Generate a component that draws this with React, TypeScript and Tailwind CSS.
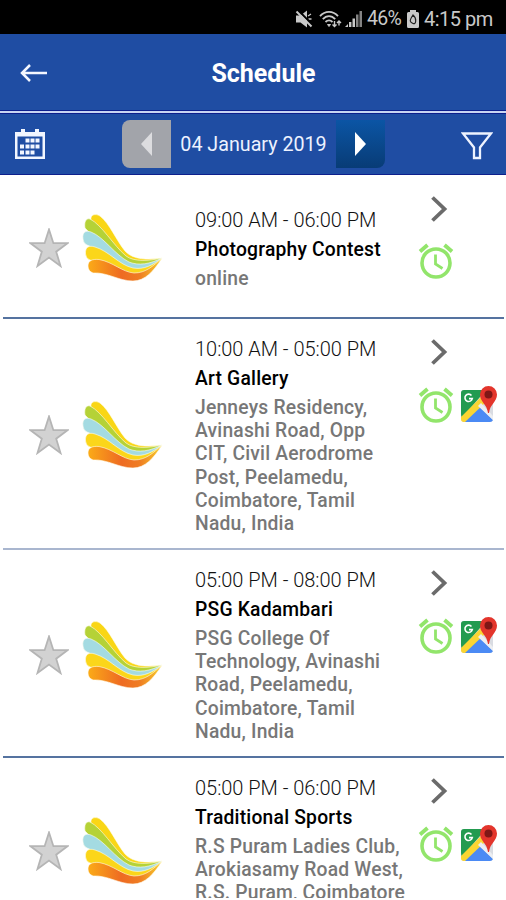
import React from "react";

interface ScheduleEvent {
  time: string;
  title: string;
  venue: string[];
  hasMap: boolean;
  rowClass: string;
}

const events: ScheduleEvent[] = [
  {
    time: "09:00 AM - 06:00 PM",
    title: "Photography Contest",
    venue: ["online"],
    hasMap: false,
    rowClass: "h-[143px] border-[#5573a0]",
  },
  {
    time: "10:00 AM - 05:00 PM",
    title: "Art Gallery",
    venue: [
      "Jenneys Residency,",
      "Avinashi Road, Opp",
      "CIT, Civil Aerodrome",
      "Post, Peelamedu,",
      "Coimbatore, Tamil",
      "Nadu, India",
    ],
    hasMap: true,
    rowClass: "h-[231px] border-[#a9b6cf]",
  },
  {
    time: "05:00 PM - 08:00 PM",
    title: "PSG Kadambari",
    venue: [
      "PSG College Of",
      "Technology, Avinashi",
      "Road, Peelamedu,",
      "Coimbatore, Tamil",
      "Nadu, India",
    ],
    hasMap: true,
    rowClass: "h-[208px] border-[#5573a0]",
  },
  {
    time: "05:00 PM - 06:00 PM",
    title: "Traditional Sports",
    venue: ["R.S Puram Ladies Club,", "Arokiasamy Road West,", "R.S. Puram, Coimbatore"],
    hasMap: true,
    rowClass: "h-[185px] border-[#5573a0]",
  },
];

const StatusBar = () => (
  <div className="h-[34px] shrink-0 bg-black flex items-center pl-[295px] pt-[3px] text-[#c9c9c9]">
    {/* Muted speaker */}
    <svg className="w-[18px] h-[18px] shrink-0" viewBox="0 0 18 18">
      <path d="M1 5.500h4.500L12 .5v17l-6.500-5H1z" fill="currentColor" />
      <path d="M13 6l3-2M13.500 9h3" stroke="currentColor" strokeWidth="1.3" />
      <path d="M3.500 .5l14 14.500" stroke="#000" strokeWidth="2" />
      <path d="M1.500 1.500l15 15" stroke="currentColor" strokeWidth="2" />
    </svg>
    {/* Wifi */}
    <svg className="w-[23px] h-[18px] shrink-0 ml-[6px]" viewBox="0 0 23 18" fill="none" stroke="currentColor" strokeWidth="1.8">
      <path d="M1 6.2C6 .4 14 .4 19 6.2" />
      <path d="M3.800 9.200C7.500 5 12.500 5 16.200 9.200" />
      <path d="M6.500 12c2.200-2.200 4.800-2.200 7 0" />
      <path d="M8.500 14.500h3L10 16.500z" fill="currentColor" strokeWidth="1" />
      <path d="M15.500 11v5m-2-1.500l2 2 2-2M20 15.500V11m-2 2l2-2 2 2" strokeWidth="1.4" />
    </svg>
    {/* Signal */}
    <svg className="w-[18px] h-[18px] shrink-0 ml-[3px]" viewBox="0 0 18 18" fill="currentColor">
      <path d="M0 17l3-3v3z" />
      <path d="M4 12h2.400v5H4zM7.500 8.500h2.500V17H7.500z" />
      <path d="M11 4.500h2.500V17H11zM14.500 1h2.500v16h-2.500z" opacity=".65" />
    </svg>
    <span className="ml-[4px] w-[34px] text-[19.500px] leading-5 tracking-[-0.700px] whitespace-nowrap">46%</span>
    {/* Battery */}
    <svg className="w-[12px] h-[18px] shrink-0 ml-[6px]" viewBox="0 0 12 18">
      <path d="M3 0h6v2h1.500Q12 2 12 3.500v13q0 1.500-1.500 1.500h-9Q0 18 0 16.500v-13Q0 2 1.500 2H3z" fill="currentColor" />
      <path d="M6 5Q9 7.500 8.700 11T6 13.500 3.300 11 6 5z" fill="none" stroke="#222" strokeWidth="1.200" />
    </svg>
    <span className="ml-[5px] text-[20px] leading-5 tracking-[-0.500px] whitespace-nowrap">4:15 pm</span>
  </div>
);

const CalendarIcon = () => (
  <svg className="w-[32px] h-[32px]" viewBox="0 0 32 32" fill="#f2f6ff">
    <path d="M1 4h30v27H1zM3.500 8.500v20h25v-20z" fillRule="evenodd" />
    <path d="M7 1h4v6H7zM21 1h4v6h-4z" />
    <path d="M11.500 10.500h4v4h-4zM16.500 10.500h4v4h-4zM21.500 10.500h4v4h-4zM6 16.500h4v4H6zM11.500 16.500h4v4h-4zM16.500 16.500h4v4h-4zM21.500 16.500h4v4h-4zM6 22.500h4v4H6zM11.500 22.500h4v4h-4zM16.500 22.500h4v4h-4z" />
  </svg>
);

const StarIcon = () => (
  <svg className="w-[40px] h-[40px] shrink-0" viewBox="0 0 40 40">
    <path
      d="M20 1.500L24.400 15.200H38.500L27.200 23.700L31.500 38L20 29.500L8.500 38L12.800 23.700L1.500 15.200H15.600Z"
      fill="#d2d2d2"
      stroke="#b5b5b5"
      strokeWidth="1.800"
    />
  </svg>
);

const WingLogo = () => (
  <svg className="w-[82px] h-[70px] shrink-0" viewBox="0 0 82 70">
    <defs>
      <linearGradient id="ember" x1="0" x2="1">
        <stop offset="0" stopColor="#fbab17" />
        <stop offset=".45" stopColor="#ee6b22" />
        <stop offset=".7" stopColor="#ef7d23" />
        <stop offset="1" stopColor="#f8d02a" />
      </linearGradient>
    </defs>
    {/* Feathers overlap from the top one down */}
    <g stroke="#fffef0" strokeWidth=".6">
      <path d="M9 7C8 2 13 0 18 3C28 11 34 27 43 38C51 47 66 47 80 45C73 49 67 50 61 50C40 50 22 30 9 7Z" fill="#f9d616" />
      <path d="M3 15C2 9 4 5 8 6C20 12 31 32 44 43C52 49 67 48 80 45C72 52 66 54 59 54C35 52 16 28 3 15Z" fill="#b5d237" />
      <path d="M1 26C0 19 4 17 9 19C22 24 33 42 47 49C57 53 68 51 80 45C72 55 64 58 55 58C32 55 18 36 5 32Q1 30 1 26Z" fill="#a4dbe2" />
      <path d="M3.500 41C3 34 7 32 13 34C27 38 37 52 51 55C62 57 71 52 80 45C72 58 63 62 53 62C34 60 22 50 8 47Q4 46 3.500 41Z" fill="#fbd61a" />
      <path d="M6 53C6 47 11 46 17 46.500C31 49 40 59 52 60C64 60 71 53 80 45C72 58 63 68 51 68C37 68 25 59 11 60Q6 58 6 53Z" fill="url(#ember)" />
    </g>
  </svg>
);

const AlarmIcon = () => (
  <svg className="w-[36px] h-[36px] shrink-0" viewBox="0 0 36 36" fill="none" stroke="#92e56b">
    <circle cx="18" cy="20" r="14" strokeWidth="3.600" />
    <path d="M2 8.500L9.500 2M26.500 2L34 8.500" strokeWidth="3.800" />
    <path d="M17.500 11.500v9.500l7 4.500" strokeWidth="2.800" />
  </svg>
);

const MapIcon = () => (
  <svg className="w-[36px] h-[37px] shrink-0" viewBox="0 0 36 37">
    <path d="M3 4h26q3 0 3 3v26q0 3-3 3H3q-3 0-3-3V7q0-3 3-3z" fill="#d9dce2" />
    <path d="M1 34L17 19L32 34Q31 36 29 36H3z" fill="#4b8af4" />
    <path d="M3 4h22L1 32Q0 30 0 28V7q0-3 3-3z" fill="#239b50" />
    <path d="M0 31L23 8l3 7L4 36H3q-3 0-3-3z" fill="#fbd532" />
    <path d="M17 20l3-3L32 30v4z" fill="#edeef1" />
    <path d="M10.500 9.400a3.700 3.700 0 1 0 .8 3.200H8" fill="none" stroke="#fff" strokeWidth="1.600" />
    <path d="M27.500 0a8.500 8.500 0 0 1 8.500 8.500C36 16 29 18 28 27h-1C26 18 19 16 19 8.500A8.500 8.500 0 0 1 27.500 0z" fill="#e3352c" />
    <circle cx="27.500" cy="8.500" r="4" fill="#7f1716" />
  </svg>
);

const ScheduleRow = ({ event }: { event: ScheduleEvent }) => (
  <div className={`ml-[3px] mr-[2px] flex shrink-0 border-b-2 ${event.rowClass}`}>
    {/* Favourite and logo */}
    <div className="w-[192px] pl-[26px] pt-[3px] flex items-center gap-[13px]">
      <StarIcon />
      <WingLogo />
    </div>

    {/* Details */}
    <div className={`w-[220px] flex flex-col whitespace-nowrap ${event.hasMap ? "pt-[18px]" : "pt-[32px]"}`}>
      <span className="text-[20px] leading-[25px] font-light text-[#111] tracking-[-0.030px]">{event.time}</span>
      <span className="mt-[4px] text-[19.300px] leading-[26px] font-medium text-black tracking-[0.200px]">{event.title}</span>
      <div className="mt-[4px] text-[19.300px] leading-[23.200px] font-medium text-[#777] tracking-[0.200px]">
        {event.venue.map((line) => (
          <div key={line}>{line}</div>
        ))}
      </div>
    </div>

    {/* Actions */}
    <div className="pt-[19px]">
      <svg className="w-[18px] h-[28px] ml-[15px]" viewBox="0 0 18 28" fill="none" stroke="#6b6b6b" strokeWidth="3.800">
        <path d="M2.500 2.500L14.500 14L2.500 25.500" />
      </svg>
      <div className="mt-[20px] ml-[3px] flex items-center gap-[7px]">
        <AlarmIcon />
        {event.hasMap && <MapIcon />}
      </div>
    </div>
  </div>
);

export default function App() {
  return (
    <div className="w-[506px] h-[900px] overflow-hidden bg-white flex flex-col font-['Roboto',sans-serif]">
      <StatusBar />

      {/* Header */}
      <header className="h-[77px] shrink-0 bg-[#1f4da3] border-b border-[#0d1f8c] grid grid-cols-3 items-center">
        <svg className="w-[28px] h-[20px] mt-[2px] ml-[20px]" viewBox="0 0 28 20" fill="none" stroke="#f4f7ff" strokeWidth="2.500">
          <path d="M27 10H2M10 2L2 10l8 8" />
        </svg>
        <h1 className="pt-[3px] pl-[21px] text-[25px] leading-7 font-bold text-white text-center whitespace-nowrap">Schedule</h1>
      </header>
      <div className="h-[2px] shrink-0 bg-[#c9d5f2]" />

      {/* Date bar */}
      <div className="h-[62px] shrink-0 bg-[#1f4da3] border-y border-[#0d1f8c] flex items-center">
        <div className="w-[122px] pl-[14px]">
          <CalendarIcon />
        </div>
        <div className="w-[49px] h-[48px] rounded-l-[8px] bg-[#a2a4aa] flex items-center justify-center">
          <svg className="w-[11px] h-[24px]" viewBox="0 0 11 24">
            <path d="M11 0v24L0 12z" fill="#dcdcdf" />
          </svg>
        </div>
        <span className="w-[165px] pt-[2px] text-center text-[19.700px] leading-6 text-[#edf2ff] whitespace-nowrap">04 January 2019</span>
        <div className="w-[49px] h-[48px] rounded-br-[8px] bg-linear-to-b from-[#0b55a5] to-[#083c76] flex items-center justify-center">
          <svg className="w-[11px] h-[24px]" viewBox="0 0 11 24">
            <path d="M0 0v24L11 12z" fill="#fff" />
          </svg>
        </div>
        <svg className="w-[32px] h-[29px] mt-[2px] ml-[76px]" viewBox="0 0 32 29" fill="none" stroke="#eef3ff" strokeWidth="2.300">
          <path d="M2 2.500H30L19 16.500V27H13V16.500Z" />
        </svg>
      </div>

      {/* Events */}
      <main className="h-[723px] shrink-0 overflow-hidden flex flex-col pt-px">
        {events.map((event) => (
          <ScheduleRow key={event.title} event={event} />
        ))}
      </main>
    </div>
  );
}
